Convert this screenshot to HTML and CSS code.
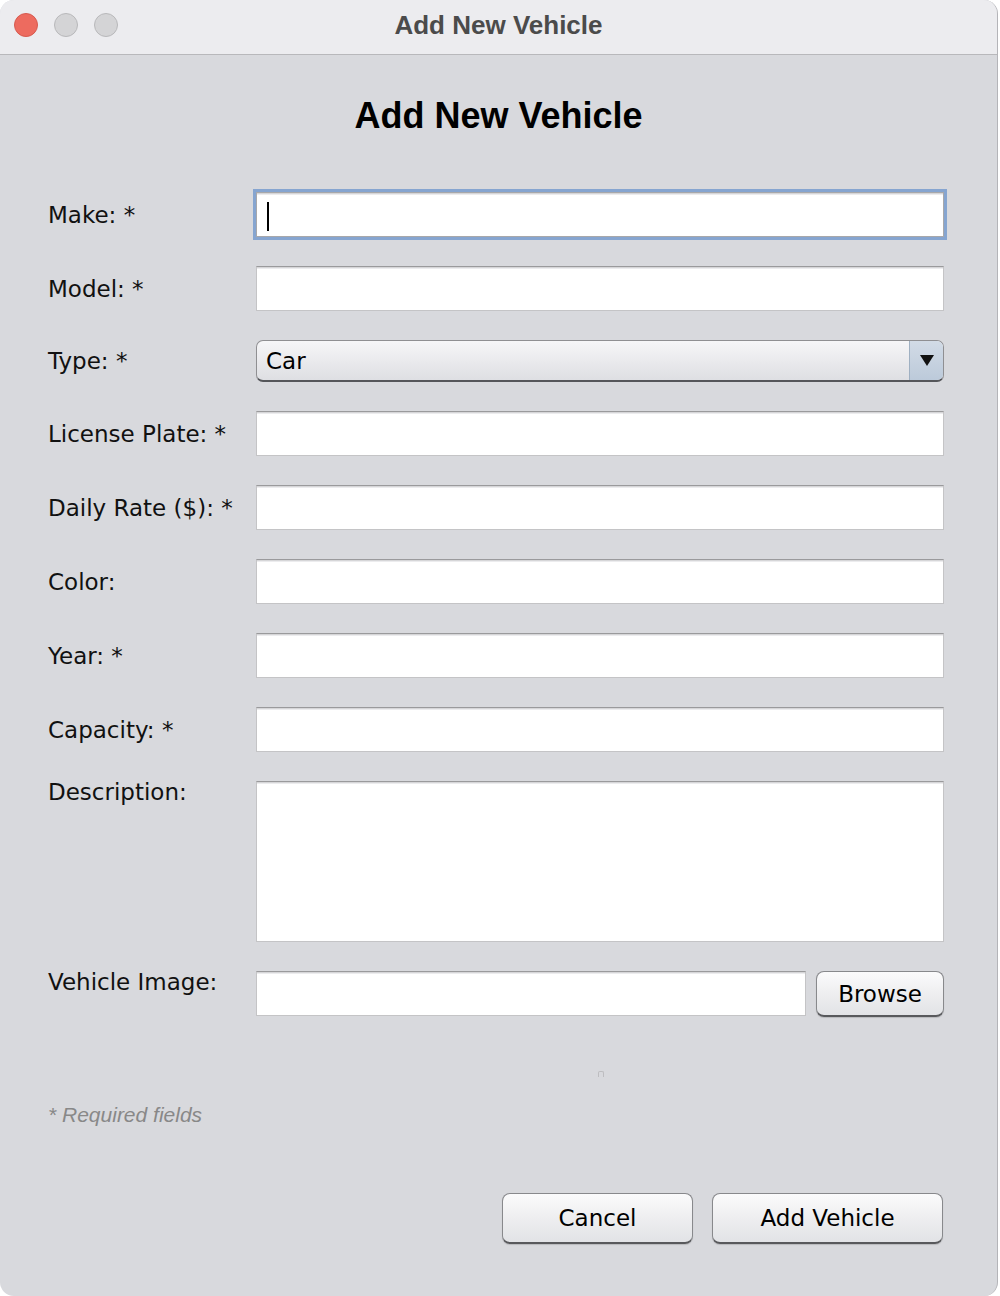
FILE: index.html
```html
<!DOCTYPE html>
<html>
<head>
<meta charset="utf-8">
<link rel="stylesheet" href="styles.css">
</head>
<body>
<div class="window">
  <div class="titlebar">
    <div class="lights">
      <span class="light red"></span>
      <span class="light gray"></span>
      <span class="light gray"></span>
    </div>
    <div class="wintitle">Add New Vehicle</div>
  </div>
  <div class="content">
    <h1 class="heading">Add New Vehicle</h1>
    <div class="form">
      <label class="lbl">Make: *</label>
      <div class="field focused"><span class="caret"></span></div>

      <label class="lbl">Model: *</label>
      <div class="field"></div>

      <label class="lbl">Type: *</label>
      <div class="combo">
        <span class="combo-text">Car</span>
        <span class="combo-arrow"><span class="tri"></span></span>
      </div>

      <label class="lbl">License Plate: *</label>
      <div class="field"></div>

      <label class="lbl">Daily Rate ($): *</label>
      <div class="field"></div>

      <label class="lbl">Color:</label>
      <div class="field"></div>

      <label class="lbl">Year: *</label>
      <div class="field"></div>

      <label class="lbl">Capacity: *</label>
      <div class="field"></div>

      <label class="lbl top">Description:</label>
      <div class="field area"></div>

      <label class="lbl top">Vehicle Image:</label>
      <div class="image-row">
        <div class="field grow"></div>
        <button class="btn browse">Browse</button>
      </div>

      <div></div>
      <div class="preview-wrap"><span class="preview"></span></div>
    </div>
    <div class="required">* Required fields</div>
    <div class="actions">
      <button class="btn cancel">Cancel</button>
      <button class="btn add">Add Vehicle</button>
    </div>
  </div>
</div>
</body>
</html>
```
FILE: styles.css
```css
html, body {
  margin: 0;
  padding: 0;
  background: #ffffff;
}
.window {
  width: 998px;
  height: 1296px;
  background: #d8d9dd;
  border-right: 1px solid #b4b4b8;
  border-radius: 14px 14px 14px 14px;
  overflow: hidden;
  font-family: "DejaVu Sans", sans-serif;
  box-sizing: border-box;
}
.titlebar {
  height: 54px;
  background: #ececef;
  border-bottom: 1px solid #b8b8bb;
  display: flex;
  align-items: center;
  position: relative;
}
.lights {
  display: flex;
  gap: 16px;
  padding-left: 14px;
  margin-top: -4px;
}
.light {
  width: 24px;
  height: 24px;
  border-radius: 50%;
  box-sizing: border-box;
}
.light.red {
  background: #ed6b5f;
  border: 1px solid #d65a4f;
}
.light.gray {
  background: #d4d4d6;
  border: 1px solid #b8b8ba;
}
.wintitle {
  position: absolute;
  left: 0;
  right: 0;
  top: 0;
  line-height: 50px;
  text-align: center;
  font-family: "Liberation Sans", Arial, sans-serif;
  font-weight: bold;
  font-size: 26px;
  color: #4b4b4b;
  pointer-events: none;
}
.content {
  padding: 41px 54px 0 48px;
}
.heading {
  margin: 0;
  height: 40px;
  line-height: 40px;
  text-align: center;
  font-family: "Liberation Sans", Arial, sans-serif;
  font-weight: bold;
  font-size: 36px;
  color: #000;
  padding-left: 6px;
}
.form {
  margin-top: 56px;
  display: grid;
  grid-template-columns: 208px 688px;
  row-gap: 29px;
}
.lbl {
  font-size: 23px;
  color: #111;
  align-self: center;
  white-space: nowrap;
  line-height: 26px;
}
.lbl.top {
  align-self: start;
  margin-top: -2px;
}
.field {
  height: 45px;
  background: #fff;
  box-sizing: border-box;
  border: 1px solid #c4c4c6;
  border-top-color: #9a9a9c;
  box-shadow: inset 0 1px 0 #d6d6d8, inset 0 2px 0 #ececee;
  position: relative;
}
.field.focused {
  box-shadow: 0 0 0 3px #86a5d0, inset 0 1px 0 #d6d6d8, inset 0 2px 0 #ececee;
  border-color: #a8a8aa;
}
.caret {
  position: absolute;
  left: 10px;
  top: 9px;
  width: 2px;
  height: 29px;
  background: #000;
}
.field.area {
  height: 161px;
}
.combo {
  height: 42px;
  align-self: center;
  box-sizing: border-box;
  border: 1px solid #8f8f92;
  border-bottom: 2px solid #55565a;
  border-radius: 7px;
  background: linear-gradient(#f6f6f8, #e9e9ec 55%, #dedfe3);
  display: flex;
  align-items: center;
  overflow: hidden;
}
.combo-text {
  flex: 1;
  padding-left: 9px;
  font-size: 23px;
  color: #000;
}
.combo-arrow {
  width: 33px;
  align-self: stretch;
  background: linear-gradient(#d2dbe6, #bccada);
  border-left: 1px solid #9fb0c2;
  display: flex;
  align-items: center;
  justify-content: center;
}
.tri {
  width: 0;
  height: 0;
  border-left: 7px solid transparent;
  border-right: 7px solid transparent;
  border-top: 11px solid #111;
}
.image-row {
  display: flex;
  gap: 10px;
  align-items: flex-start;
}
.field.grow {
  flex: 1;
}
.btn {
  font-family: "DejaVu Sans", sans-serif;
  font-size: 23px;
  color: #000;
  background: linear-gradient(#fbfbfc, #eeeef0 50%, #e2e3e6);
  border: 1px solid #88898c;
  border-bottom: 2px solid #58595c;
  border-radius: 8px;
  box-shadow: 0 1px 1px rgba(0,0,0,0.15);
  padding: 0;
  box-sizing: border-box;
}
.btn.browse {
  width: 128px;
  height: 46px;
}
.preview-wrap {
  display: flex;
  justify-content: center;
  padding-top: 25px;
}
.preview {
  width: 6px;
  height: 6px;
  border: 1px solid #bdbdc0;
  border-bottom: none;
  border-radius: 2px 2px 0 0;
  box-sizing: border-box;
  margin-left: 2px;
}
.required {
  margin-top: 26px;
  font-family: "Liberation Sans", Arial, sans-serif;
  font-style: italic;
  font-size: 21px;
  color: #888;
  line-height: 24px;
}
.actions {
  margin-top: 66px;
  display: flex;
  justify-content: flex-end;
  gap: 19px;
}
.btn.cancel {
  width: 191px;
  height: 51px;
}
.btn.add {
  width: 231px;
  height: 51px;
}
```
